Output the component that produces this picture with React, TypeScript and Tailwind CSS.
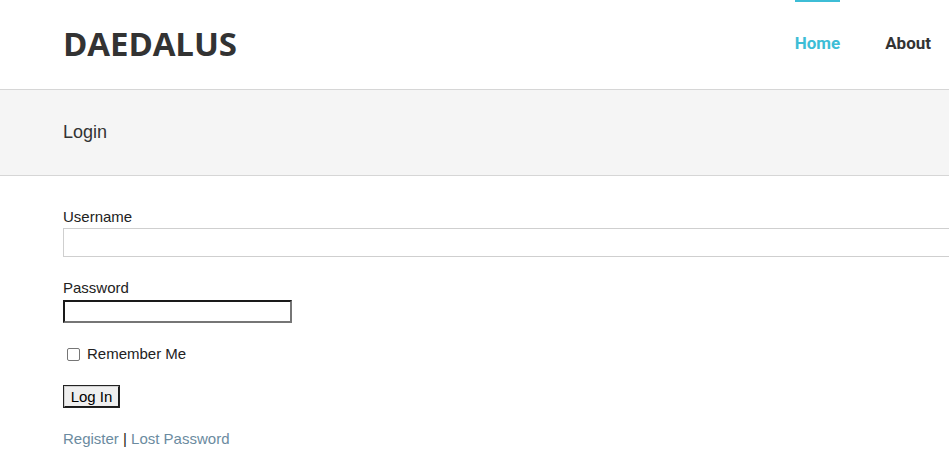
import React from 'react';

const sans = { fontFamily: '"Liberation Sans", Arial, sans-serif' };

export default function App() {
  return (
    <div className="min-h-screen bg-white text-[#222]" style={sans}>
      {/* header */}
      <header className="h-[90px] border-b border-[#d6d6d6] flex items-stretch justify-between pl-[63px] pr-[18px]">
        <div className="flex items-center">
          <span className="text-[33px] font-bold text-[#333] tracking-[-0.1px] font-['Open_Sans',sans-serif] pb-[1px]">
            DAEDALUS
          </span>
        </div>
        <nav className="flex items-stretch gap-[45px] font-['Roboto',sans-serif] text-[17px] font-bold">
          <a className="flex items-center border-t-2 border-[#3dbdd6] text-[#3dbdd6] pb-[4px]">Home</a>
          <a className="flex items-center border-t-2 border-transparent text-[#333] pb-[4px]">About</a>
        </nav>
      </header>

      {/* page title band */}
      <div className="h-[86px] bg-[#f5f5f5] border-b border-[#d6d6d6] flex items-center pl-[63px]">
        <h1 className="text-[18px] text-[#333]">Login</h1>
      </div>

      {/* login form */}
      <form className="pl-[63px] pt-[32px] text-[15px] overflow-hidden">
        <label className="block leading-[18px]">Username</label>
        <input type="text" className="block w-[900px] h-[29px] mt-[2px] border border-[#cfcfcf] bg-white" />

        <label className="block leading-[18px] mt-[22px]">Password</label>
        <input
          type="password"
          className="block w-[229px] h-[23px] mt-[3px] border-2 border-t-[#1a1a1a] border-l-[#1a1a1a] border-b-[#767676] border-r-[#767676] bg-white"
        />

        <label className="flex items-center mt-[22px] leading-[18px]">
          <span className="ml-[4px] w-[13px] h-[13px] rounded-[2px] border border-[#767676] bg-white" />
          <span className="ml-[7px]">Remember Me</span>
        </label>

        <button
          type="button"
          className="block mt-[22px] w-[57px] h-[23px] bg-[#efefef] border-2 border-t-[#cfcfcf] border-l-[#cfcfcf] border-b-[#1a1a1a] border-r-[#1a1a1a] outline outline-1 outline-[#222] -outline-offset-1 text-[15px] leading-[19px] text-black"
        >
          Log In
        </button>

        <p className="mt-[22px] leading-[18px]">
          <a className="text-[#6b8ba0]">Register</a>
          <span className="text-[#222]"> | </span>
          <a className="text-[#6b8ba0]">Lost Password</a>
        </p>
      </form>
    </div>
  );
}
